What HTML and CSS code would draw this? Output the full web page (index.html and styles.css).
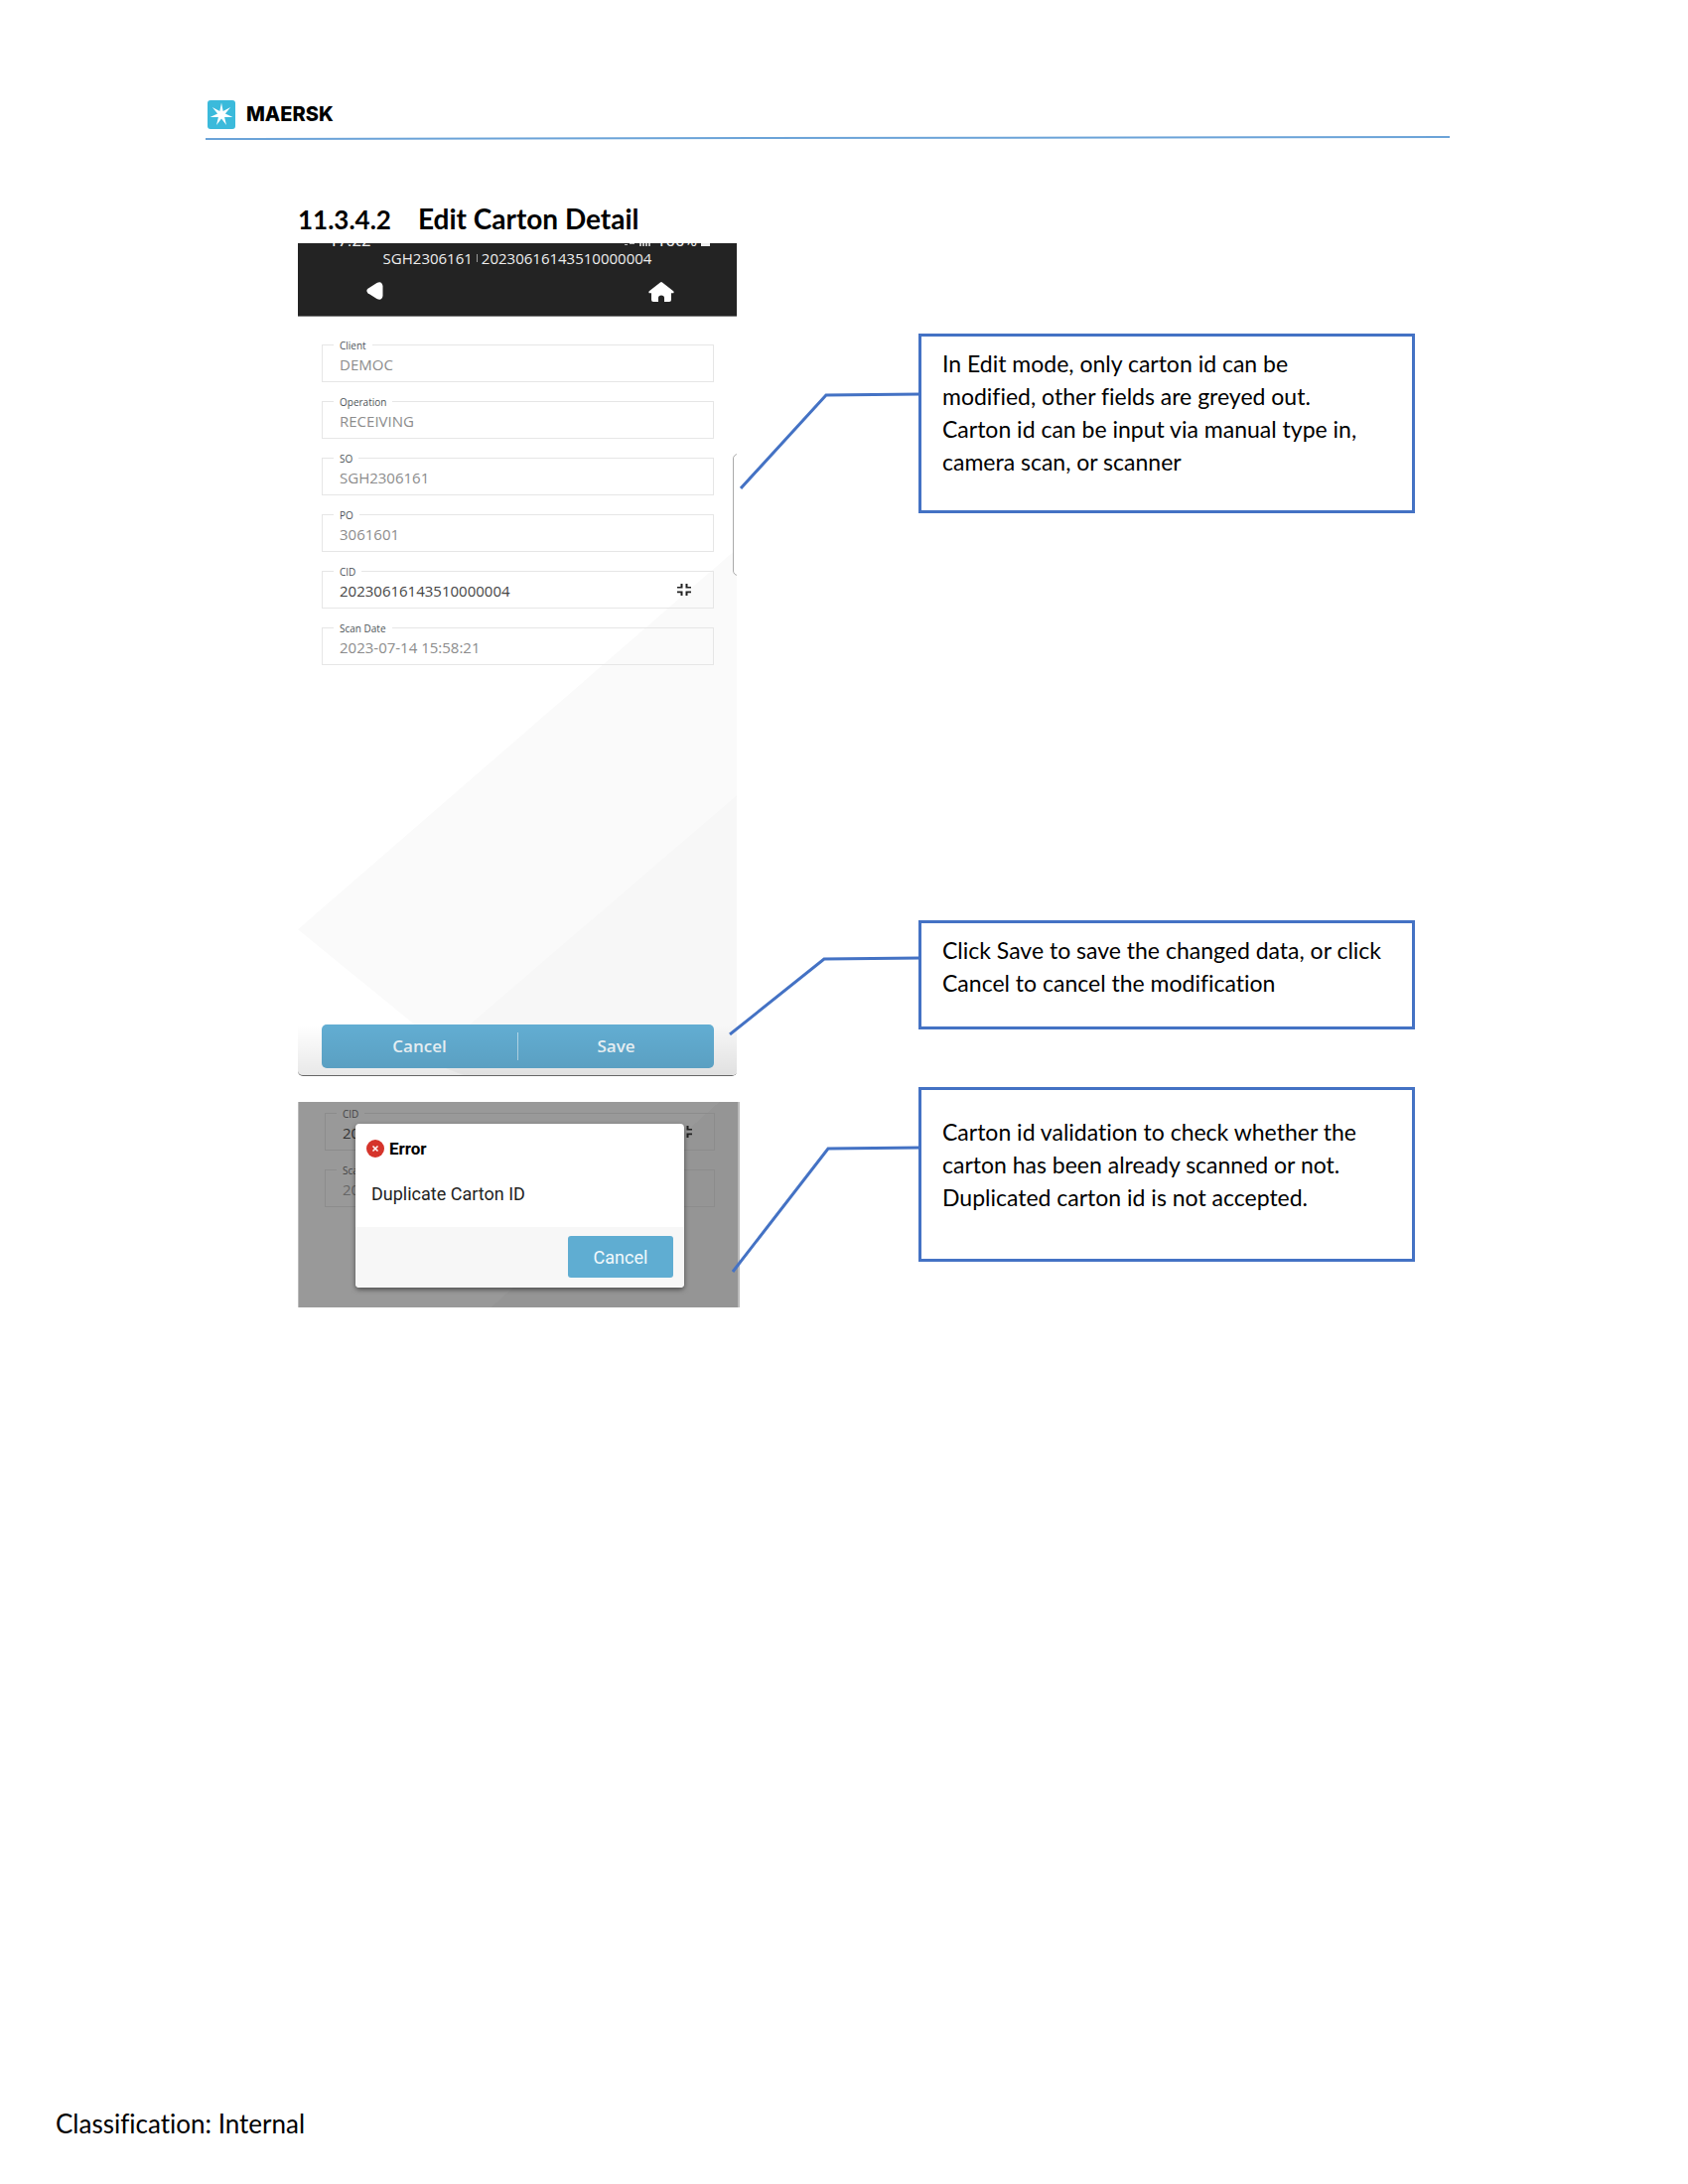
FILE: index.html
```html
<!DOCTYPE html>
<html lang="en">
<head>
<meta charset="utf-8">
<title>Edit Carton Detail</title>
<link rel="stylesheet" href="styles.css">
</head>
<body>
<div class="page">
  <header class="page-header">
    <div class="brand">
      <svg class="brand-mark" viewBox="0 0 28 29" aria-hidden="true">
        <rect width="28" height="29" rx="3" fill="#3bbadb"/>
        <path transform="translate(14 14.5)" fill="#fff" d="M0-12 1.7-3.6 9.2-7.4 3.9-.9 11.4 2.6 3.1 2.5 5 10.6 0 4-5 10.6-3.1 2.5-11.4 2.6-3.9-.9-9.2-7.4-1.7-3.6Z"/>
      </svg>
      <span class="brand-name">MAERSK</span>
    </div>
    <svg class="header-rule" viewBox="0 0 1252 6" preserveAspectRatio="none" aria-hidden="true">
      <path d="M0 4 1252 2" stroke="#6ba3d8" stroke-width="2"/>
    </svg>
  </header>

  <main class="content">
    <h1 class="section-title"><span class="section-number">11.3.4.2</span><span>Edit Carton Detail</span></h1>

    <div class="walkthrough">
      <div class="screens">
        <section class="phone">
          <div class="app-bar">
            <div class="status"><span>17:22</span><span class="status-right">
              <svg width="28" height="12" viewBox="0 0 28 12" fill="#bbb" aria-hidden="true"><path d="M0 10h3v1H0zM5 9h5v1H5zM15 8h2v4h-2zM18 6h2v6h-2zM21 4h2v8h-2zM24 2h2v10h-2z"/></svg>
              <span>100%</span>
              <svg width="9" height="12" viewBox="0 0 9 12" aria-hidden="true"><path fill="#eee" d="M0 1h9v11H0z"/></svg>
            </span></div>
            <div class="app-title">SGH2306161 <span class="bar"></span> 20230616143510000004</div>
            <nav class="app-nav">
              <button class="icon-button" type="button" aria-label="Back"><svg width="17" height="18" viewBox="0 0 17 18"><path fill="#fff" d="M1.500 6.800 10.500 1Q15.500-1.500 16.500 4V14Q15.500 19.500 10.500 17L1.500 11.200Q-.8 9 1.500 6.800Z"/></svg></button>
              <button class="icon-button" type="button" aria-label="Home"><svg width="26" height="20" viewBox="0 0 26 20"><path fill="#fff" d="M12 .5Q13-.3 14 .5L25.200 9.300Q26.400 11.200 24.200 11.300H23V18Q23 20 21 20H16V16Q16 13.500 13 13.500T10 16V20H5Q3 20 3 18V11.300H1.800Q-.4 11.200.8 9.300Z"/></svg></button>
            </nav>
          </div>
          <form class="phone-body">
            <svg class="backdrop" viewBox="0 0 442 765" preserveAspectRatio="none" aria-hidden="true">
              <path fill="#fafafa" d="M0 618 442 234V765H180Z"/>
              <path fill="#f7f7f7" d="M442 483 130 751 167 765H442Z"/>
            </svg>
            <div class="scroll-handle"></div>
            <div class="fields">
              <div class="field"><label for="client">Client</label><input id="client" value="DEMOC" disabled></div>
              <div class="field"><label for="operation">Operation</label><input id="operation" value="RECEIVING" disabled></div>
              <div class="field"><label for="so">SO</label><input id="so" value="SGH2306161" disabled></div>
              <div class="field"><label for="po">PO</label><input id="po" value="3061601" disabled></div>
              <div class="field"><label for="cid">CID</label><input id="cid" value="20230616143510000004">
                <svg class="scan-icon" viewBox="0 0 14 12" aria-hidden="true"><path fill="#222" d="M3.500 0H5.500V4.500H0V3H3.500ZM8.500 0H10.500V3H14V4.500H8.500ZM0 7.500H5.500V12H3.500V9.200H0ZM8.500 7.500H14V9.200H10.500V12H8.500Z"/></svg></div>
              <div class="field"><label for="scan-date">Scan Date</label><input id="scan-date" value="2023-07-14 15:58:21" disabled></div>
            </div>
            <div class="actions">
              <button type="button">Cancel</button>
              <button type="button">Save</button>
            </div>
          </form>
        </section>

        <section class="phone-crop">
          <div class="fields">
            <div class="field"><label for="cid-2">CID</label><input id="cid-2" value="20230616143510000004">
              <svg class="scan-icon" viewBox="0 0 14 12" aria-hidden="true"><path fill="#222" d="M3.500 0H5.500V4.500H0V3H3.500ZM8.500 0H10.500V3H14V4.500H8.500ZM0 7.500H5.500V12H3.500V9.200H0ZM8.500 7.500H14V9.200H10.500V12H8.500Z"/></svg></div>
            <div class="field"><label for="scan-date-2">Scan Date</label><input id="scan-date-2" value="2023-07-14 15:58:21" disabled></div>
          </div>
          <div class="dialog" role="alertdialog" aria-labelledby="error-title">
            <div class="dialog-body">
              <h2 class="dialog-title" id="error-title">
                <svg width="18" height="18" viewBox="0 0 18 18" aria-hidden="true"><circle cx="9" cy="9" r="9" fill="#d5342b"/><path d="M6.500 6.500 11.500 11.500M11.500 6.500 6.500 11.500" stroke="#fff" stroke-width="1.500"/></svg>
                Error</h2>
              <p class="dialog-text">Duplicate Carton ID</p>
            </div>
            <div class="dialog-footer"><button type="button">Cancel</button></div>
          </div>
        </section>
      </div>

      <div class="notes">
        <aside class="note note-edit">
          <svg class="connector" width="183" height="98" viewBox="0 0 183 98" aria-hidden="true"><path d="M1 97 87 3 183 2"/></svg>
          <p>In Edit mode, only carton id can be modified, other fields are greyed out. Carton id can be input via manual type in, camera scan, or scanner</p>
        </aside>
        <aside class="note note-save">
          <svg class="connector" width="194" height="80" viewBox="0 0 194 80" aria-hidden="true"><path d="M1 79 96 3 194 2"/></svg>
          <p>Click Save to save the changed data, or click Cancel to cancel the modification</p>
        </aside>
        <aside class="note note-error">
          <svg class="connector" width="191" height="128" viewBox="0 0 191 128" aria-hidden="true"><path d="M1 127 97 3 191 2"/></svg>
          <p>Carton id validation to check whether the carton has been already scanned or not. Duplicated carton id is not accepted.</p>
        </aside>
      </div>
    </div>
  </main>

  <footer class="page-footer">Classification: Internal</footer>
</div>
</body>
</html>
```
FILE: styles.css
```css
* { box-sizing: border-box; }

body {
  margin: 0;
  background: #fff;
  color: #000;
  font-family: Lato, sans-serif;
  font-variant-ligatures: none;
}

h1, h2, p { margin: 0; }

button, input { font: inherit; }

.page {
  display: flex;
  flex-direction: column;
  min-height: 100vh;
}

/* Letterhead */
.page-header { padding: 101px 240px 0 207px; }

.brand {
  display: flex;
  align-items: center;
  gap: 11px;
  height: 29px;
  padding-left: 2px;
}

.brand-mark { width: 28px; height: 29px; }

.brand-name {
  font: 800 20px/29px Inter, sans-serif;
}

.header-rule {
  display: block;
  width: 100%;
  height: 6px;
  margin-top: 6px;
}

/* Section */
.content { padding: 62px 275px 0 300px; }

.section-title {
  display: flex;
  align-items: baseline;
  gap: 27px;
  font-size: 28px;
  line-height: 32px;
  padding-bottom: 8px;
}

.section-number { font-size: 26px; }

.walkthrough {
  display: grid;
  grid-template-columns: 445px minmax(300px, 1fr);
  gap: 180px;
}

.screens {
  display: flex;
  flex-direction: column;
  gap: 26px;
  font-family: "Open Sans", sans-serif;
}

/* Phone screen */
.phone {
  display: flex;
  flex-direction: column;
  width: 442px;
  min-height: 839px;
}

.app-bar {
  height: 74px;
  overflow: hidden;
  background: #232323;
  border-bottom: 1px solid #777;
  color: #eee;
}

.status {
  display: flex;
  justify-content: space-between;
  height: 20px;
  margin-top: -13px;
  padding: 0 27px 0 31px;
  font: 17px/20px Roboto, sans-serif;
}

.status-right {
  display: flex;
  align-items: center;
  gap: 4px;
}

.app-title {
  display: flex;
  justify-content: center;
  align-items: center;
  gap: 4px;
  font-size: 15px;
  font-weight: 500;
  line-height: 16px;
}

.bar { width: 1px; height: 8px; background: #999; }

.app-nav {
  display: flex;
  justify-content: space-between;
  padding: 16px 63px 0 69px;
}

.icon-button {
  display: flex;
  padding: 0;
  border: 0;
  background: none;
}

.phone-body {
  position: relative;
  flex: 1;
  display: flex;
  flex-direction: column;
  justify-content: space-between;
  padding: 28px 23px 7px 24px;
  border-bottom: 1px solid #666;
  border-radius: 0 0 5px 5px;
  overflow: hidden;
}

.phone-body::after {
  content: "";
  position: absolute;
  inset: auto 0 0;
  height: 50px;
  background: linear-gradient(transparent, rgba(0, 0, 0, 0.09));
  pointer-events: none;
}

.backdrop {
  position: absolute;
  inset: 0;
  width: 100%;
  height: 100%;
}

.scroll-handle {
  position: absolute;
  top: 138px;
  right: -6px;
  width: 10px;
  height: 123px;
  border: 1px solid #aaa;
  border-radius: 5px;
  background: #fff;
}

.fields {
  position: relative;
  display: grid;
  gap: 19px;
}

.field { position: relative; }

.field label {
  position: absolute;
  top: -6px;
  left: 12px;
  padding: 0 6px;
  background: #fff;
  color: #4c5357;
  font-size: 10px;
  line-height: 14px;
}

.field input {
  display: block;
  width: 100%;
  height: 38px;
  padding: 1px 17px 0;
  border: 1px solid #e6e6e6;
  border-radius: 0;
  background: transparent;
  color: #444;
  font-size: 15px;
  font-weight: 500;
}

.field input:disabled { color: #8c8c8c; }

.scan-icon {
  position: absolute;
  top: 13px;
  right: 23px;
  width: 14px;
  height: 12px;
}

.actions {
  position: relative;
  display: flex;
  padding: 8px 0;
  border-radius: 5px;
  background: #62add2;
}

.actions button {
  flex: 1;
  height: 28px;
  padding: 0;
  border: 0;
  background: none;
  color: #eef7fb;
  font-size: 17px;
  font-weight: 600;
  line-height: 28px;
}

.actions button + button { border-left: 1px solid #b5d9ea; }

/* Dimmed screen with the error dialog */
.phone-crop {
  position: relative;
  height: 207px;
  padding: 11px 23px 0 26px;
  border-left: 1px solid #bbb;
  border-right: 2px solid #bbb;
  background: linear-gradient(138deg, #999 63%, #959595 63%);
}

.phone-crop .field label { background: #999; color: #444; }
.phone-crop .field input { border-color: #8c8c8c; color: #333; }
.phone-crop .field input:disabled { color: #666; }

.dialog {
  position: absolute;
  top: 22px;
  left: 57px;
  width: 331px;
  overflow: hidden;
  border-radius: 4px;
  background: #fff;
  box-shadow: 0 2px 5px rgba(0, 0, 0, 0.5);
  font-family: Roboto, sans-serif;
}

.dialog-body { height: 104px; padding: 15px 11px 0; }

.dialog-title {
  display: flex;
  align-items: center;
  gap: 5px;
  font-size: 17px;
  line-height: 20px;
}

.dialog-text {
  padding: 25px 5px 0;
  color: #222;
  font-size: 18px;
  line-height: 22px;
}

.dialog-footer {
  display: flex;
  justify-content: flex-end;
  padding: 9px 11px 10px;
  background: #f7f7f7;
}

.dialog-footer button {
  width: 106px;
  height: 42px;
  border: 0;
  border-radius: 3px;
  background: #5fadd2;
  color: #f2f9fc;
  font-size: 18px;
}

/* Callouts */
.notes {
  display: flex;
  flex-direction: column;
  padding-top: 91px;
}

.note {
  position: relative;
  padding: 11px 20px 11px 21px;
  border: 3px solid #4472c4;
  font-size: 23px;
  line-height: 33px;
}

.note-edit { min-height: 181px; padding-right: 40px; }
.note-save { min-height: 110px; margin-top: 410px; }
.note-error { min-height: 176px; margin-top: 58px; padding-top: 26px; }

.connector {
  position: absolute;
  top: 56px;
  right: 100%;
  fill: none;
  stroke: #4472c4;
  stroke-width: 3;
}

.note-save .connector { top: 33px; }

.page-footer {
  margin-top: auto;
  padding: 40px 56px 45px;
  font-size: 26px;
  line-height: 32px;
}
```
